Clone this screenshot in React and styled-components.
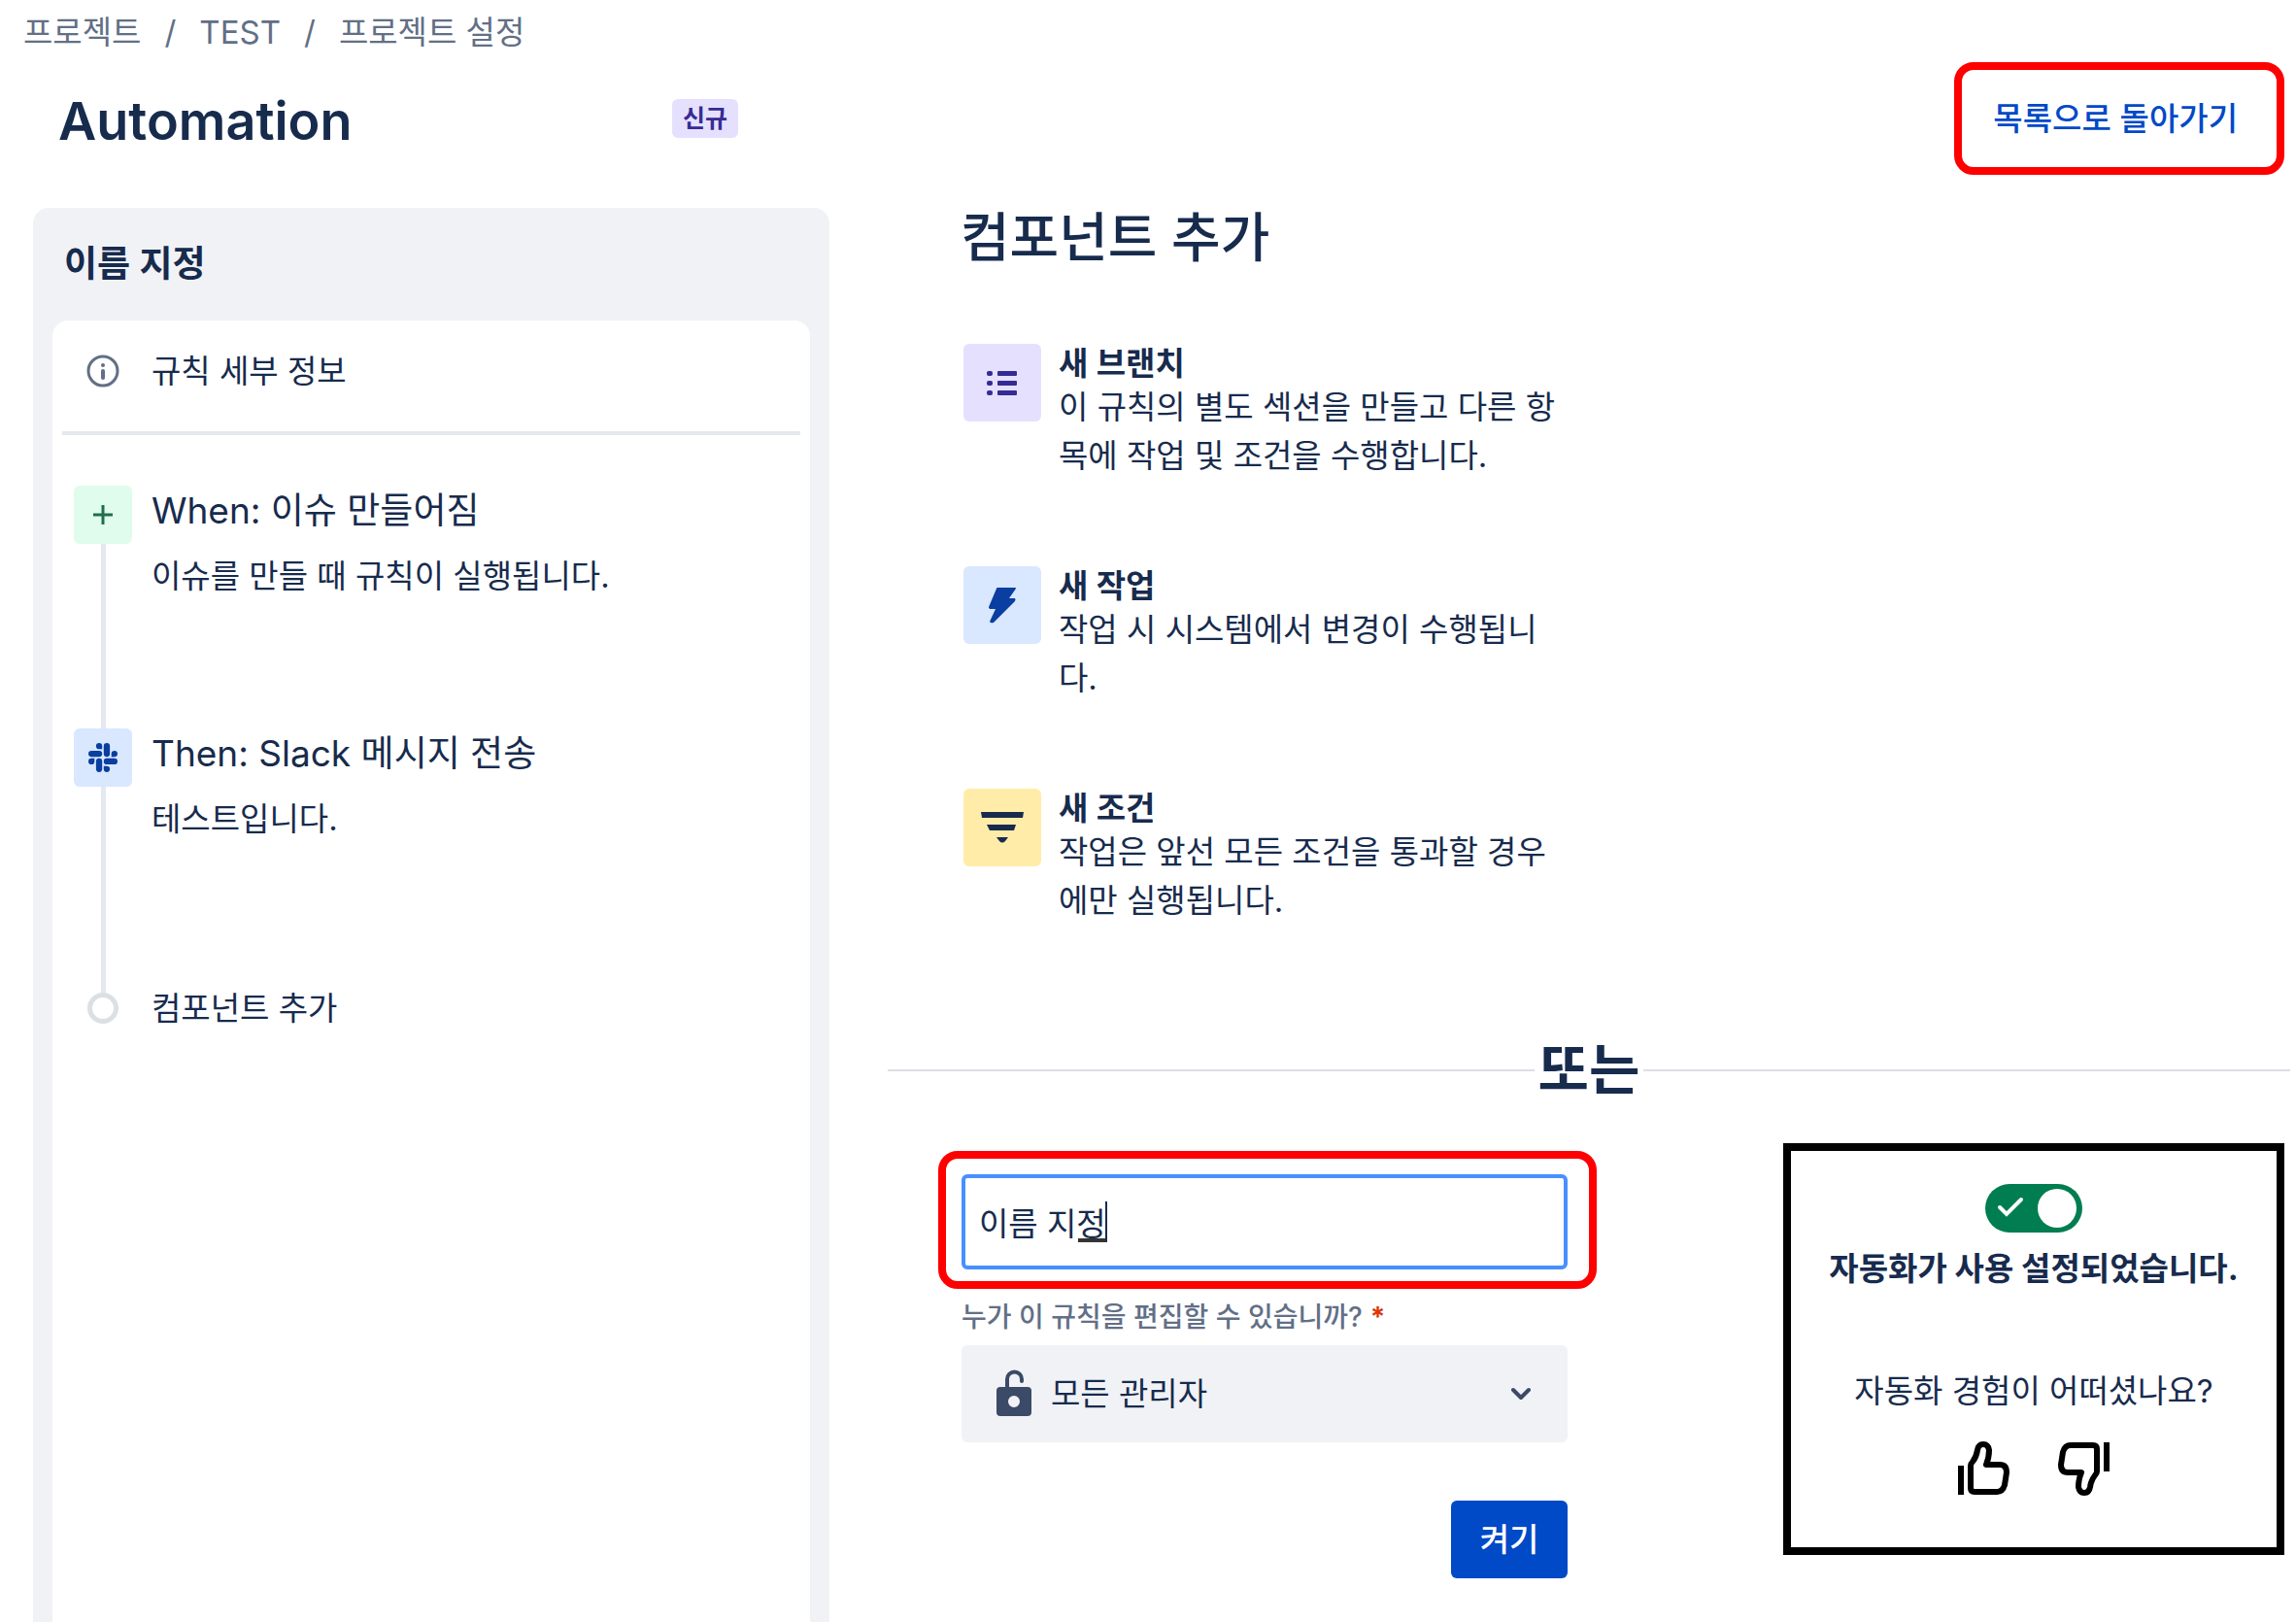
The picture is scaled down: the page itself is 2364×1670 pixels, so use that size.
import styled, { createGlobalStyle } from "styled-components";
import React, { useState } from "react";

const colors = {
    text: "#172b4d",
    subtle: "#626f86",
    panel: "#f1f2f6",
    line: "#e6e8ef",
    blue: "#0049c7",
    purpleBg: "#e6e0ff",
    purple: "#352c93",
    blueBg: "#d9e7ff",
    navy: "#0a3ea0",
    greenBg: "#e0fcec",
    green: "#216e4e",
    yellowBg: "#ffeca8",
};

// icons
const InfoIcon = () => (
    <svg width="36" height="36" viewBox="0 0 36 36" fill="none">
        <circle cx="18" cy="18" r="15" stroke="#626f86" strokeWidth="3" />
        <circle cx="18" cy="12" r="2" fill="#626f86" />
        <path
            d="M18 18v7"
            stroke="#626f86"
            strokeWidth="4"
            strokeLinecap="round"
        />
    </svg>
);

const PlusIcon = () => (
    <svg width="20" height="20" viewBox="0 0 20 20" fill="none">
        <path d="M10 0v20M0 10h20" stroke={colors.green} strokeWidth="3" />
    </svg>
);

const SlackIcon = () => (
    <svg width="30" height="30" viewBox="0 0 24 24" fill={colors.navy}>
        <path d="M5.04 15.17a2.53 2.53 0 0 1-2.52 2.52A2.53 2.53 0 0 1 0 15.17a2.53 2.53 0 0 1 2.52-2.53h2.52zm1.27 0a2.53 2.53 0 0 1 2.52-2.53 2.53 2.53 0 0 1 2.52 2.53v6.31A2.53 2.53 0 0 1 8.83 24a2.53 2.53 0 0 1-2.52-2.52zM8.83 5.04a2.53 2.53 0 0 1-2.52-2.52A2.53 2.53 0 0 1 8.83 0a2.53 2.53 0 0 1 2.53 2.52v2.52zm0 1.27a2.53 2.53 0 0 1 2.53 2.52 2.53 2.53 0 0 1-2.53 2.52H2.52A2.53 2.53 0 0 1 0 8.83a2.53 2.53 0 0 1 2.52-2.52zM18.96 8.83a2.53 2.53 0 0 1 2.52-2.52A2.53 2.53 0 0 1 24 8.83a2.53 2.53 0 0 1-2.52 2.53h-2.52zm-1.27 0a2.53 2.53 0 0 1-2.52 2.53 2.53 2.53 0 0 1-2.53-2.53V2.52A2.53 2.53 0 0 1 15.17 0a2.53 2.53 0 0 1 2.52 2.52zM15.17 18.96a2.53 2.53 0 0 1 2.52 2.52A2.53 2.53 0 0 1 15.17 24a2.53 2.53 0 0 1-2.53-2.52v-2.52zm0-1.27a2.53 2.53 0 0 1-2.53-2.52 2.53 2.53 0 0 1 2.53-2.53h6.31A2.53 2.53 0 0 1 24 15.17a2.53 2.53 0 0 1-2.52 2.52z" />
    </svg>
);

const ListIcon = () => (
    <svg width="32" height="28" viewBox="0 0 32 28" fill={colors.purple}>
        <rect x="0" y="2" width="6" height="5" rx="2" />
        <rect x="11" y="2" width="20" height="5" rx="1" />
        <rect x="0" y="12" width="6" height="5" rx="2" />
        <rect x="11" y="12" width="20" height="5" rx="1" />
        <rect x="0" y="22" width="6" height="5" rx="2" />
        <rect x="11" y="22" width="20" height="5" rx="1" />
    </svg>
);

const BoltIcon = () => (
    <svg width="28" height="38" viewBox="0 0 28 38" fill={colors.navy}>
        <path d="M9 1h18a1 1 0 0 1 1 1l-7 10h6q1 1 0 3L5 37q-3 1-4-1l6-13H1q-1-1-1-2L8 2q0-1 1-1z" />
    </svg>
);

const FilterIcon = () => (
    <svg width="44" height="32" viewBox="0 0 44 32" fill={colors.text}>
        <path d="M0 0h44l-1 6H1zM6 13h30l-2 6H9zM16 26h12l-3 4q-3 3-6 0z" />
    </svg>
);

const UnlockIcon = () => (
    <svg width="36" height="50" viewBox="0 0 36 50" fill="none">
        <path
            d="M11 20V10a7 7 0 0 1 15 0v2"
            stroke="#3b4a66"
            strokeWidth="4"
            strokeLinecap="round"
        />
        <path
            fillRule="evenodd"
            d="M4 18h28a4 4 0 0 1 4 4v22a4 4 0 0 1-4 4H4a4 4 0 0 1-4-4V22a4 4 0 0 1 4-4zm14 9a6 6 0 1 0 0 12 6 6 0 0 0 0-12z"
            fill="#3b4a66"
        />
    </svg>
);

const ChevronIcon = () => (
    <svg width="20" height="14" viewBox="0 0 20 14" fill="none">
        <path
            d="M2 3l8 8 8-8"
            stroke="#3b4a66"
            strokeWidth="4"
            strokeLinecap="round"
            strokeLinejoin="round"
        />
    </svg>
);

const CheckIcon = () => (
    <svg width="28" height="24" viewBox="0 0 28 24" fill="none">
        <path
            d="M3 11l7 7L25 3"
            stroke="#ffffff"
            strokeWidth="4"
            strokeLinecap="round"
        />
    </svg>
);

const ThumbIcon = ({ down }) => (
    <svg width="56" height="58" viewBox="0 0 56 58" fill="none">
        <g
            transform={down ? "rotate(180 28 29)" : undefined}
            stroke="#000000"
            strokeWidth="6"
            strokeLinejoin="round"
        >
            <path d="M5 26v30" />
            <path d="M15 49V26q0-2 2-4 4-5 5-12 1-6 6-6t6 6q0 8-3 15h14q7 0 7 8l-2 13q-2 7-8 7H19q-4 0-4-4z" />
        </g>
    </svg>
);

const App = () => {
    const [name, setName] = useState("이름 지정");
    const [enabled, setEnabled] = useState(true);

    return (
        <>
            <GlobalStyle />
            <Page>
                <Breadcrumbs>
                    <a href="#projects">프로젝트</a>
                    <span>/</span>
                    <a href="#test">TEST</a>
                    <span>/</span>
                    <a href="#settings">프로젝트 설정</a>
                </Breadcrumbs>
                <Header>
                    <h1>Automation</h1>
                    <Badge>신규</Badge>
                    <BackButton type="button">목록으로 돌아가기</BackButton>
                </Header>
                <Columns>
                    <RulePanel>
                        <h2>이름 지정</h2>
                        <RuleCard>
                            <RuleDetails>
                                <IconSlot>
                                    <InfoIcon />
                                </IconSlot>
                                규칙 세부 정보
                            </RuleDetails>
                            <Step>
                                <Track>
                                    <StepIcon $bg={colors.greenBg}>
                                        <PlusIcon />
                                    </StepIcon>
                                </Track>
                                <StepText>
                                    <h3>When: 이슈 만들어짐</h3>
                                    <p>이슈를 만들 때 규칙이 실행됩니다.</p>
                                </StepText>
                            </Step>
                            <Step $last>
                                <Track>
                                    <StepIcon $bg={colors.blueBg}>
                                        <SlackIcon />
                                    </StepIcon>
                                </Track>
                                <StepText>
                                    <h3>Then: Slack 메시지 전송</h3>
                                    <p>테스트입니다.</p>
                                </StepText>
                            </Step>
                            <AddStep type="button">
                                <IconSlot>
                                    <Dot />
                                </IconSlot>
                                컴포넌트 추가
                            </AddStep>
                        </RuleCard>
                    </RulePanel>
                    <Main>
                        <h2>컴포넌트 추가</h2>
                        <Options>
                            <Option
                                bg={colors.purpleBg}
                                icon={<ListIcon />}
                                title="새 브랜치"
                                text="이 규칙의 별도 섹션을 만들고 다른 항목에 작업 및 조건을 수행합니다."
                            />
                            <Option
                                bg={colors.blueBg}
                                icon={<BoltIcon />}
                                title="새 작업"
                                text="작업 시 시스템에서 변경이 수행됩니다."
                            />
                            <Option
                                bg={colors.yellowBg}
                                icon={<FilterIcon />}
                                title="새 조건"
                                text="작업은 앞선 모든 조건을 통과할 경우에만 실행됩니다."
                            />
                        </Options>
                        <Divider>또는</Divider>
                        <Bottom>
                            <Form onSubmit={(e) => e.preventDefault()}>
                                <NameField>
                                    <input
                                        type="text"
                                        aria-label="이름 지정"
                                        value={name}
                                        onChange={(e) =>
                                            setName(e.target.value)
                                        }
                                    />
                                    <Composing />
                                </NameField>
                                <Label htmlFor="editors">
                                    누가 이 규칙을 편집할 수 있습니까?
                                    <b>*</b>
                                </Label>
                                <SelectField>
                                    <UnlockIcon />
                                    <select id="editors">
                                        <option>모든 관리자</option>
                                    </select>
                                    <ChevronIcon />
                                </SelectField>
                                <SubmitButton type="submit">켜기</SubmitButton>
                            </Form>
                            <StatusCard>
                                <Toggle>
                                    <input
                                        type="checkbox"
                                        role="switch"
                                        aria-labelledby="status"
                                        checked={enabled}
                                        onChange={() =>
                                            setEnabled((prev) => !prev)
                                        }
                                    />
                                    <CheckIcon />
                                    <Knob />
                                </Toggle>
                                <strong id="status">
                                    자동화가 사용 설정되었습니다.
                                </strong>
                                <p>자동화 경험이 어떠셨나요?</p>
                                <Thumbs>
                                    <button type="button" aria-label="좋아요">
                                        <ThumbIcon />
                                    </button>
                                    <button type="button" aria-label="싫어요">
                                        <ThumbIcon down />
                                    </button>
                                </Thumbs>
                            </StatusCard>
                        </Bottom>
                    </Main>
                </Columns>
            </Page>
        </>
    );
};

export default App;

const Option = ({ bg, icon, title, text }) => (
    <OptionStyled>
        <Tile $bg={bg}>{icon}</Tile>
        <div>
            <h3>{title}</h3>
            <p>{text}</p>
        </div>
    </OptionStyled>
);

const GlobalStyle = createGlobalStyle`
    * {
        box-sizing: border-box;
    }

    body {
        margin: 0;
        background-color: #ffffff;
        color: ${colors.text};
        font-family: Inter, "Noto Sans CJK KR", sans-serif;
        font-size: 33px;
        line-height: 50px;
    }

    h1, h2, h3, p {
        margin: 0;
        font-size: 33px;
        font-weight: 500;
    }

    p {
        font-weight: 400;
    }

    button, input, select {
        font: inherit;
        color: inherit;
        margin: 0;
    }

    svg {
        display: block;
        flex-shrink: 0;
    }
`;

const Page = styled.div`
    display: flex;
    flex-direction: column;
    min-height: 100vh;
`;

const Breadcrumbs = styled.nav`
    display: flex;
    gap: 24px;
    padding: 8px 24px 6px;
    color: ${colors.subtle};

    a {
        color: inherit;
        text-decoration: none;
    }
`;

const Header = styled.header`
    display: flex;
    align-items: center;
    padding: 0 12px 0 60px;

    h1 {
        width: 632px;
        padding-top: 6px;
        font-size: 54px;
        font-weight: 600;
        line-height: 64px;
    }
`;

const Badge = styled.span`
    padding: 0 11px;
    border-radius: 6px;
    background-color: ${colors.purpleBg};
    color: ${colors.purple};
    font-size: 25px;
    font-weight: 700;
    line-height: 40px;
`;

const BackButton = styled.button`
    margin-left: auto;
    padding: 25px 40px 25px 32px;
    border: 8px solid #ff0000;
    border-radius: 20px;
    background: none;
    color: ${colors.blue};
    font-weight: 500;
`;

const Columns = styled.div`
    display: flex;
    flex: 1;
    gap: 60px;
    padding: 34px 6px 0 34px;
`;

const RulePanel = styled.aside`
    display: flex;
    flex-direction: column;
    width: 820px;
    flex-shrink: 0;
    padding: 33px 20px 0;
    border-radius: 16px 16px 0 0;
    background-color: ${colors.panel};

    h2 {
        padding: 0 12px 33px;
        font-size: 37px;
        font-weight: 600;
    }
`;

const RuleCard = styled.div`
    flex: 1;
    padding: 0 10px;
    border-radius: 16px 16px 0 0;
    background-color: #ffffff;
`;

const RuleDetails = styled.div`
    display: flex;
    align-items: center;
    gap: 20px;
    margin-bottom: 52px;
    padding: 27px 12px 37px;
    border-bottom: 4px solid ${colors.line};
`;

const IconSlot = styled.span`
    display: flex;
    justify-content: center;
    width: 60px;
`;

const Step = styled.div`
    display: flex;
    gap: 20px;
    min-height: ${(props) => (props.$last ? "272px" : "250px")};
    padding-left: 12px;
`;

const Track = styled.div`
    display: flex;
    flex-direction: column;
    align-items: center;

    &::after {
        content: "";
        flex: 1;
        width: 5px;
        background-color: ${colors.line};
    }
`;

const StepIcon = styled.div`
    display: grid;
    place-items: center;
    width: 60px;
    height: 60px;
    border-radius: 6px;
    background-color: ${(props) => props.$bg};
`;

const StepText = styled.div`
    h3 {
        margin-bottom: 16px;
        font-size: 37px;
        font-weight: 400;
        line-height: 52px;
    }
`;

const AddStep = styled.button`
    display: flex;
    align-items: center;
    gap: 20px;
    padding: 0 12px;
    border: none;
    background: none;
    line-height: 32px;
`;

const Dot = styled.span`
    width: 32px;
    height: 32px;
    border: 5px solid #dcdfe4;
    border-radius: 50%;
`;

const Main = styled.main`
    flex: 1;
    min-width: 0;

    > h2 {
        padding-left: 75px;
        font-size: 55px;
        line-height: 60px;
    }
`;

const Options = styled.div`
    display: flex;
    flex-direction: column;
    gap: 89px;
    padding: 80px 78px 0;
`;

const OptionStyled = styled.div`
    display: flex;
    gap: 18px;
    max-width: 616px;

    h3 {
        font-weight: 600;
        line-height: 40px;
    }
`;

const Tile = styled.div`
    display: grid;
    flex-shrink: 0;
    place-items: center;
    width: 80px;
    height: 80px;
    border-radius: 6px;
    background-color: ${(props) => props.$bg};
`;

const Divider = styled.div`
    display: flex;
    align-items: center;
    gap: 4px;
    margin-top: 110px;
    font-size: 57px;
    font-weight: 700;
    line-height: 80px;

    &::before,
    &::after {
        content: "";
        flex: 1;
        height: 2px;
        background-color: #dcdfe4;
    }
`;

const Bottom = styled.div`
    display: flex;
    align-items: flex-start;
    justify-content: space-between;
    padding: 35px 6px 0 52px;
`;

const Form = styled.form`
    display: flex;
    flex-direction: column;
    width: 678px;
    padding-top: 8px;
`;

const NameField = styled.div`
    position: relative;
    padding: 16px 22px 12px 16px;
    border: 8px solid #ff0000;
    border-radius: 20px;

    input {
        display: block;
        width: 100%;
        height: 98px;
        padding: 0 14px;
        border: 4px solid #4790ff;
        border-radius: 6px;
        outline: none;
    }
`;

// underline and caret for the syllable still being composed
const Composing = styled.span`
    position: absolute;
    top: 44px;
    left: 136px;
    width: 30px;
    height: 42px;
    border-right: 2px solid ${colors.text};
    border-bottom: 4px solid #333333;
`;

const Label = styled.label`
    padding: 4px 24px 4px;
    color: ${colors.subtle};
    font-size: 28px;
    font-weight: 500;

    b {
        margin-left: 8px;
        color: #de350b;
    }
`;

const SelectField = styled.div`
    position: relative;
    display: flex;
    align-items: center;
    height: 100px;
    margin: 0 30px 0 24px;
    border-radius: 6px;
    background-color: ${colors.panel};

    select {
        width: 100%;
        height: 100%;
        padding: 0 92px;
        border: none;
        background: none;
        appearance: none;
    }

    svg {
        position: absolute;
        pointer-events: none;
    }

    svg:first-child {
        left: 36px;
    }

    svg:last-child {
        right: 38px;
    }
`;

const SubmitButton = styled.button`
    align-self: flex-end;
    width: 120px;
    height: 80px;
    margin: 60px 30px 0 0;
    border: none;
    border-radius: 6px;
    background-color: ${colors.blue};
    color: #ffffff;
    font-weight: 500;
`;

const StatusCard = styled.section`
    display: flex;
    flex-direction: column;
    align-items: center;
    width: 516px;
    padding: 34px 0 52px;
    border: 8px solid #000000;

    strong {
        margin: 12px 0 76px;
    }
`;

const Toggle = styled.label`
    display: flex;
    align-items: center;
    justify-content: space-between;
    width: 100px;
    height: 50px;
    padding: 0 6px 0 12px;
    border-radius: 25px;
    background-color: #007d51;

    input {
        position: absolute;
        opacity: 0;
    }
`;

const Knob = styled.span`
    width: 40px;
    height: 40px;
    border-radius: 50%;
    background-color: #ffffff;
`;

const Thumbs = styled.div`
    display: flex;
    gap: 48px;
    margin-top: 26px;

    button {
        padding: 0;
        border: none;
        background: none;
    }
`;
